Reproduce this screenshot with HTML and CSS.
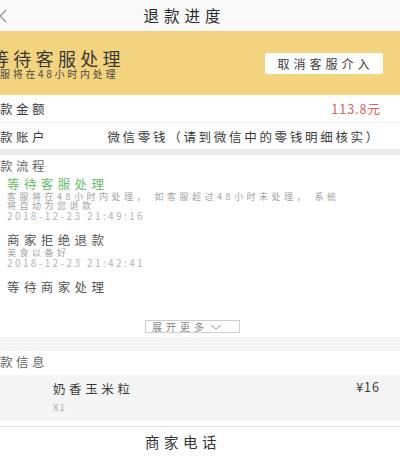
FILE: index.html
```html
<!DOCTYPE html>
<html lang="zh-CN">
<head>
<meta charset="utf-8">
<title>退款进度</title>
<link rel="stylesheet" href="styles.css">
</head>
<body>
<header class="nav">
  <svg class="back" width="8" height="14" viewBox="0 0 8 14"><polyline points="7,1 1,7 7,13" fill="none" stroke="#8a8a8a" stroke-width="1.1"/></svg>
  <h1 class="nav-title">退款进度</h1>
</header>

<section class="banner">
  <div class="banner-text">
    <div class="banner-title">等待客服处理</div>
    <div class="banner-sub">服将在48小时内处理</div>
  </div>
  <button class="cancel">取消客服介入</button>
</section>

<section class="info">
  <div class="row row-first">
    <span class="label">款金额</span>
    <span class="amount">113.8元</span>
  </div>
  <div class="row">
    <span class="label">款账户</span>
    <span class="account">微信零钱（请到微信中的零钱明细核实）</span>
  </div>
</section>

<section class="flow">
  <div class="sec-title">款流程</div>
  <ul class="steps">
    <li class="step step-active">
      <div class="step-title">等待客服处理</div>
      <div class="step-desc">客服将在48小时内处理， 如客服超过48小时未处理， 系统<br>将自动为您退款</div>
      <div class="step-time">2018-12-23 21:49:16</div>
    </li>
    <li class="step">
      <div class="step-title">商家拒绝退款</div>
      <div class="step-desc">美食以备好</div>
      <div class="step-time">2018-12-23 21:42:41</div>
    </li>
    <li class="step">
      <div class="step-title">等待商家处理</div>
    </li>
  </ul>
  <div class="more-wrap">
    <button class="more">展开更多<svg class="chev" width="12" height="6" viewBox="0 0 12 6"><polyline points="1,1 6,5 11,1" fill="none" stroke="#9a9a9a" stroke-width="1"/></svg></button>
  </div>
</section>

<section class="goods">
  <div class="sec-title goods-title">款信息</div>
  <div class="item">
    <div class="item-main">
      <div class="item-name">奶香玉米粒</div>
      <div class="item-qty">X1</div>
    </div>
    <div class="item-price">¥16</div>
  </div>
</section>

<footer class="phone">商家电话</footer>
</body>
</html>
```

FILE: styles.css
```css
* { box-sizing: border-box; }

body {
  margin: 0;
  width: 400px;
  height: 459px;
  overflow: hidden;
  background: #ffffff;
  font-family: "Noto Sans CJK SC", "Noto Sans", sans-serif;
  color: #444;
}

/* nav */
.nav {
  height: 31px;
  background: #f9f9f9;
  display: flex;
  align-items: center;
}
.back {
  flex: none;
  margin-left: -1px;
}
.nav-title {
  flex: 1;
  margin: 0;
  padding-right: 38px;
  text-align: center;
  font-size: 15.5px;
  font-weight: 400;
  letter-spacing: 5px;
  color: #2a2a2a;
  line-height: 31px;
}

/* banner */
.banner {
  height: 64px;
  background: #f3d37d;
  display: flex;
  align-items: center;
  justify-content: space-between;
  padding-right: 17px;
}
.banner-text {
  align-self: flex-start;
  padding-top: 17px;
}
.banner-title {
  margin-left: -9px;
  font-size: 18px;
  line-height: 20px;
  letter-spacing: 4.3px;
  color: #3a3a3a;
}
.banner-sub {
  font-size: 10px;
  line-height: 12px;
  letter-spacing: 2.7px;
  color: #4a4a4a;
}
.cancel {
  width: 118px;
  height: 21px;
  border: none;
  border-radius: 2px;
  background: #ffffff;
  padding: 0 0 0 3px;
  font-family: inherit;
  font-size: 12px;
  letter-spacing: 4px;
  color: #3a3a3a;
}

/* info rows */
.info {
  border-bottom: 6px solid #ebebeb;
}
.row {
  display: flex;
  justify-content: space-between;
  align-items: center;
  height: 26px;
  padding-right: 19px;
}
.row-first {
  height: 28px;
  border-bottom: 1px solid #eeeeee;
}
.label {
  font-size: 12.5px;
  letter-spacing: 3.5px;
  color: #3a3a3a;
}
.amount {
  font-size: 12.5px;
  letter-spacing: 1px;
  color: #d8625e;
}
.account {
  font-size: 12.5px;
  letter-spacing: 2.7px;
  color: #3a3a3a;
}

/* flow */
.flow {
  border-bottom: 14px solid #f4f4f4;
}
.sec-title {
  height: 21px;
  line-height: 21px;
  font-size: 12.5px;
  letter-spacing: 3.5px;
  color: #666;
}
.steps {
  list-style: none;
  margin: 0;
  padding: 0 0 0 7px;
  display: flex;
  flex-direction: column;
  gap: 10px;
}
.step-title {
  line-height: 16px;
  font-size: 12.5px;
  letter-spacing: 4.4px;
  color: #555;
}
.step-active .step-title {
  color: #66bd67;
}
.step-desc {
  font-size: 9px;
  line-height: 9px;
  letter-spacing: 3.5px;
  color: #a3a3a3;
}
.step-time {
  font-size: 10px;
  line-height: 12px;
  letter-spacing: 2.4px;
  color: #b3b3b3;
}
.more-wrap {
  padding: 25px 0 4px 145px;
}
.more {
  display: flex;
  align-items: center;
  width: 95px;
  height: 13px;
  padding: 0 0 0 6px;
  border: 1px solid #cfcfcf;
  background: #ffffff;
  font-family: inherit;
  font-size: 10px;
  line-height: 11px;
  letter-spacing: 4px;
  color: #888;
}
.chev {
  margin-left: 2px;
}

/* goods */
.goods {
  padding-bottom: 5px;
}
.goods-title {
  height: 22px;
  line-height: 22px;
  margin-bottom: 2px;
}
.item {
  height: 46px;
  background: #f5f5f5;
  display: flex;
  justify-content: space-between;
  padding: 0 20px 0 53px;
}
.item-name {
  padding-top: 5px;
  line-height: 18px;
  font-size: 12.5px;
  letter-spacing: 3.6px;
  color: #3a3a3a;
}
.item-qty {
  margin-top: 2px;
  line-height: 14px;
  font-size: 9.5px;
  letter-spacing: 1px;
  color: #aaa;
}
.item-price {
  padding-top: 5px;
  line-height: 14px;
  font-size: 12.5px;
  letter-spacing: 1px;
  color: #3a3a3a;
}

/* footer */
.phone {
  border-top: 1px solid #e2e2e2;
  height: 31px;
  line-height: 30px;
  padding-right: 34px;
  text-align: center;
  font-size: 14.5px;
  letter-spacing: 4.5px;
  color: #333;
}
```
